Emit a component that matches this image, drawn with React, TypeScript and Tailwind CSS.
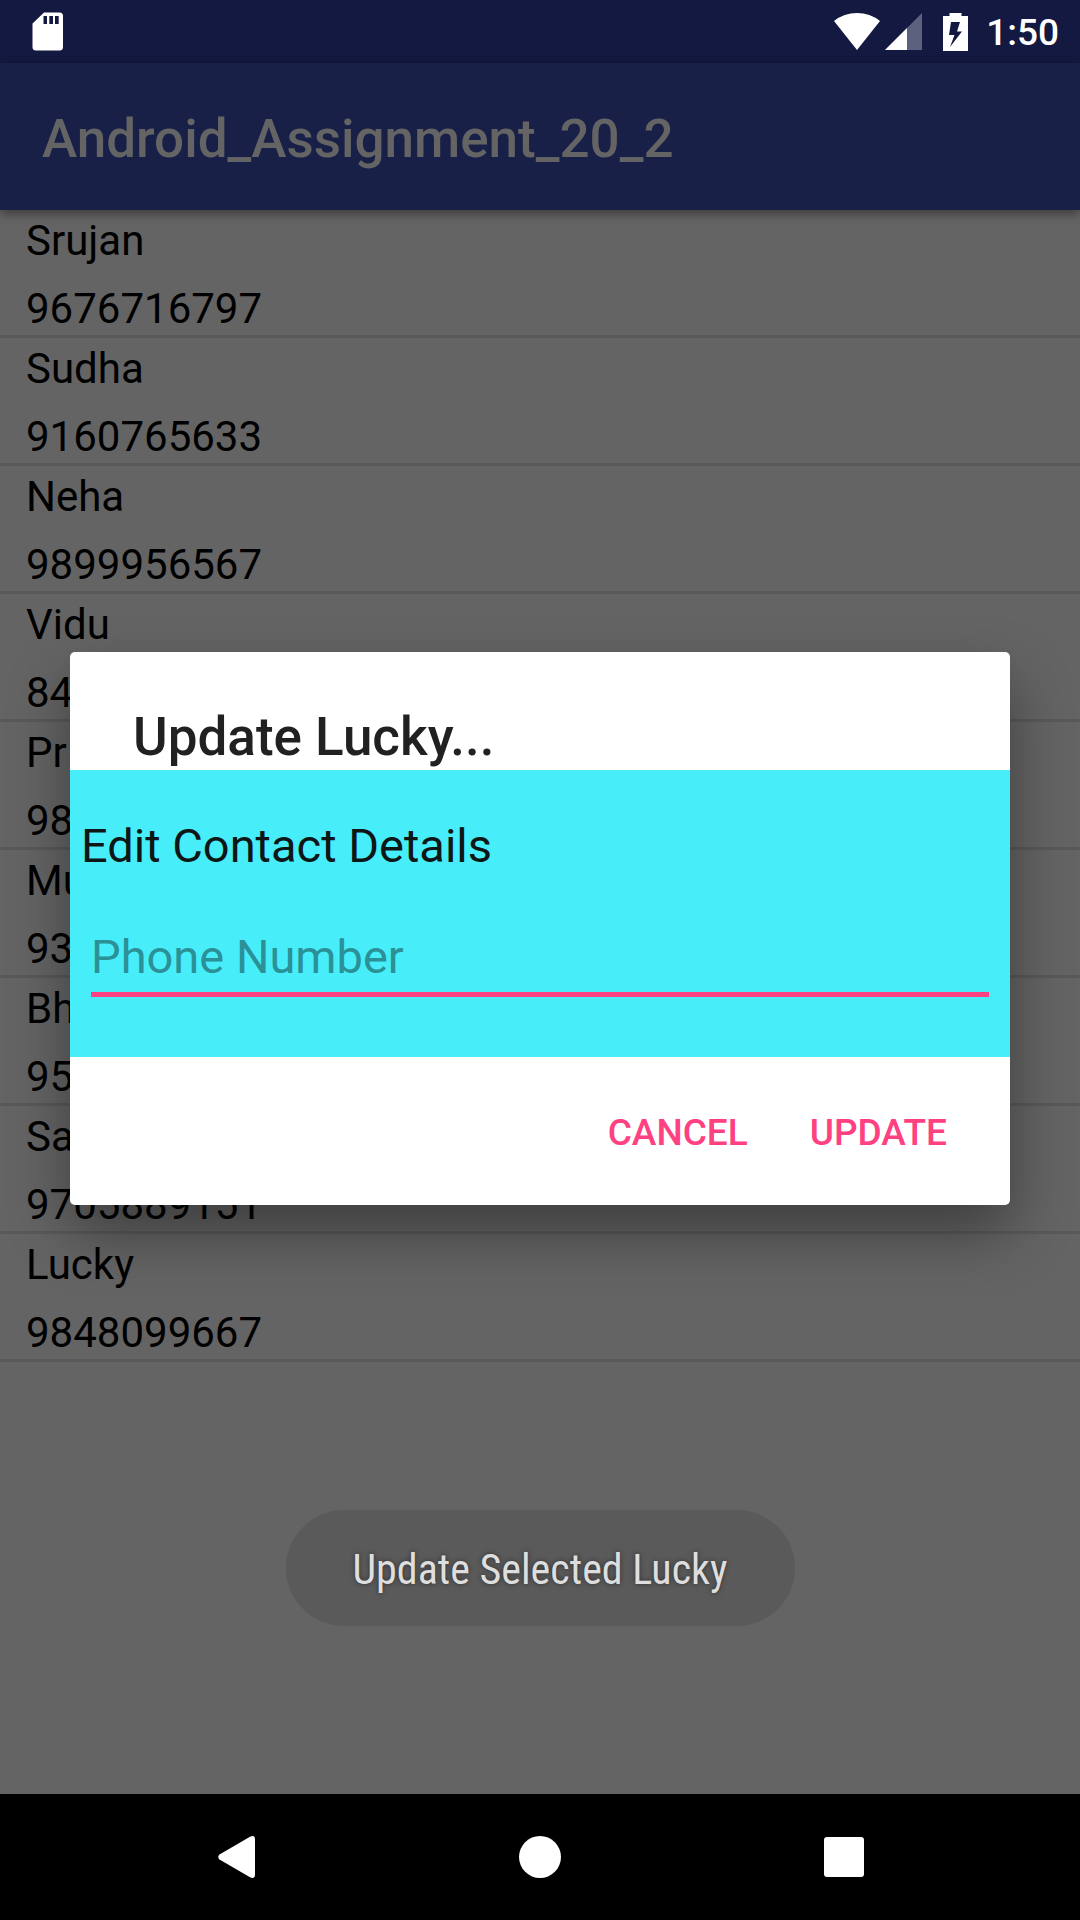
const contacts = [
  { name: "Srujan", phone: "9676716797" },
  { name: "Sudha", phone: "9160765633" },
  { name: "Neha", phone: "9899956567" },
  { name: "Vidu", phone: "84" },
  { name: "Pr", phone: "98" },
  { name: "Mu", phone: "93" },
  { name: "Bh", phone: "95" },
  { name: "Sa", phone: "9705889151" },
  { name: "Lucky", phone: "9848099667" },
];

function StatusBar() {
  return (
    <div className="flex h-[63px] items-center justify-between bg-[#131940] pr-[21px] pl-8">
      <svg width="31" height="39" viewBox="0 0 31 39" aria-label="SD card">
        <path
          fill="#fff"
          fillRule="evenodd"
          d="M12 0.5H27.5A3.5 3.5 0 0 1 31 4V35A3.5 3.5 0 0 1 27.5 38.500H4A3.500 3.500 0 0 1 0.500 35V11.500ZM11.500 4V12H15V4ZM17.300 4V12H21V4ZM23 4V12H26.700V4Z"
        />
      </svg>
      <div className="flex items-center">
        <svg width="46" height="37" viewBox="0 0 46 37" aria-label="Wi-Fi">
          <path fill="#fff" d="M0 8Q10 0 23 0T46 8L23 37Z" />
        </svg>
        <svg className="ml-[5px]" width="37" height="37" viewBox="0 0 37 37" aria-label="Signal">
          <path fill="#5d6180" d="M37 0V37H0Z" />
          <path fill="#fff" d="M22 15V37H0Z" />
        </svg>
        <svg className="ml-[21px]" width="25" height="38" viewBox="0 0 25 38" aria-label="Charging">
          <path
            fill="#fff"
            fillRule="evenodd"
            d="M6.500 0H18.500V3H25V38H0V3H6.500ZM8 9L6 22H11.500L7 34L19 18.500H14L17 9Z"
          />
        </svg>
        <span className="ml-[18px] pt-[2px] text-[37px] leading-[44px] font-medium text-white">1:50</span>
      </div>
    </div>
  );
}

function UpdateDialog() {
  return (
    <div
      role="dialog"
      aria-labelledby="dialog-title"
      className="w-full overflow-hidden rounded-[5px] bg-white shadow-[0_28px_60px_rgba(0,0,0,0.38)]"
    >
      <h2 id="dialog-title" className="px-[63px] pt-[53px] pb-px text-[53px] leading-16 font-medium text-[#212121]">
        Update Lucky...
      </h2>
      <div className="bg-[#47eefa] px-[11px] pt-12 pb-[60px]">
        <label htmlFor="phone" className="block text-[47px] leading-14 text-[#0e1616]">
          Edit Contact Details
        </label>
        <div className="px-[10px] pt-[55px]">
          <input
            id="phone"
            type="tel"
            placeholder="Phone Number"
            className="block h-[68px] w-full border-b-[5px] border-[#ff4081] bg-transparent pb-2 text-[47px] leading-14 text-black outline-none placeholder:text-[#2b9196] placeholder:opacity-100"
          />
        </div>
      </div>
      <div className="flex justify-end gap-5 px-[42px] pt-7 pb-6 text-[37px] leading-[44px] font-medium text-[#ff4081]">
        <button type="button" className="h-24 px-[21px]">CANCEL</button>
        <button type="button" className="h-24 px-[21px]">UPDATE</button>
      </div>
    </div>
  );
}

export default function App() {
  return (
    <div className="relative flex min-h-screen flex-col bg-[#646464] font-['Roboto',sans-serif]">
      <StatusBar />
      <header className="flex h-[147px] items-center bg-[#192048] px-[42px] pt-1 shadow-[0_4px_10px_rgba(0,0,0,0.4)]">
        <h1 className="text-[53px] leading-16 font-medium text-[#646464]">Android_Assignment_20_2</h1>
      </header>
      <main className="relative flex-1">
        <ul>
          {contacts.map((c) => (
            <li
              key={c.name}
              className="flex h-32 flex-col gap-[18px] border-b-3 border-[#595959] px-[26px] pt-[6px] text-[42px] leading-[50px] text-black"
            >
              <span>{c.name}</span>
              <span>{c.phone}</span>
            </li>
          ))}
        </ul>
        <div className="absolute inset-x-0 bottom-[168px] flex justify-center">
          <div
            role="status"
            className="rounded-full bg-[#5a5a5a] px-[67px] pt-[35px] pb-[31px] font-['Roboto_Condensed','Roboto',sans-serif] text-[42px] leading-[50px] text-[#dedede] [text-shadow:0_0_5px_rgba(0,0,0,0.5)]"
          >
            Update Selected Lucky
          </div>
        </div>
      </main>
      <nav className="flex h-[126px] items-center justify-around bg-black px-[84px]">
        <button type="button" aria-label="Back" className="flex w-[126px] justify-center">
          <svg width="42" height="42" viewBox="0 0 42 42">
            <path fill="#fff" d="M4.500 18.500Q2 21 4.500 23.500L35 41.300Q40 43.500 40 38.500V3.500Q40 -1.500 35 0.700Z" />
          </svg>
        </button>
        <button type="button" aria-label="Home" className="flex w-[126px] justify-center">
          <span className="size-[42px] rounded-full bg-white" />
        </button>
        <button type="button" aria-label="Overview" className="flex w-[126px] justify-center">
          <span className="size-10 rounded-[3px] bg-white" />
        </button>
      </nav>
      <div className="absolute inset-0 flex items-center justify-center px-[70px] pt-[63px] pb-[126px]">
        <UpdateDialog />
      </div>
    </div>
  );
}
